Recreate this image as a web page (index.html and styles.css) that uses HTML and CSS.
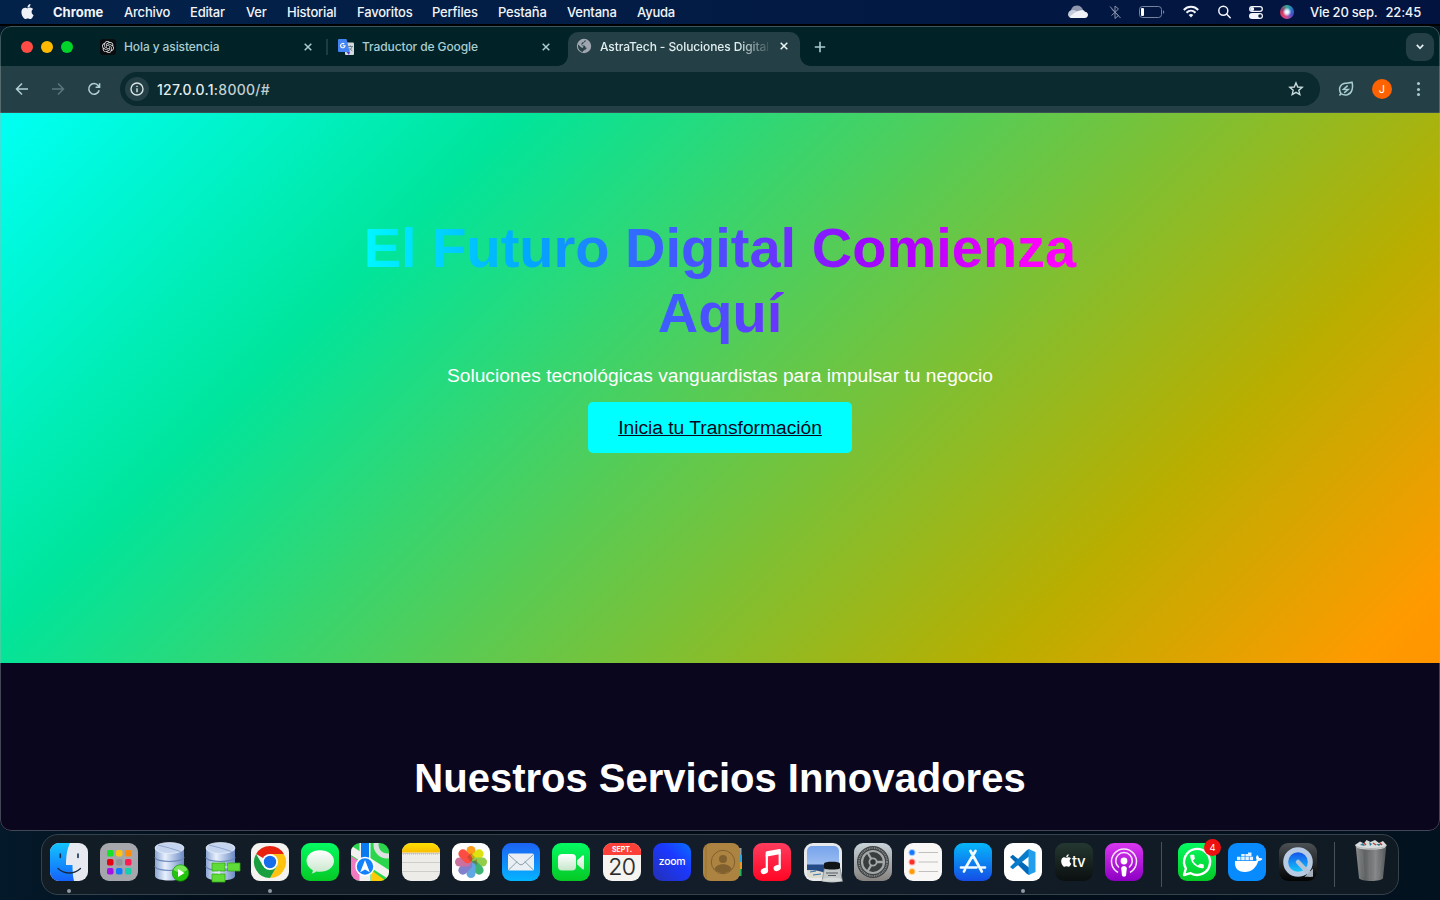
FILE: index.html
```html
<!DOCTYPE html>
<html lang="es">
<head>
<meta charset="utf-8">
<title>AstraTech - Soluciones Digitales</title>
<link rel="stylesheet" href="styles.css">
</head>
<body>
<div class="desktop">
  <header class="menubar">
    <svg class="apple" viewBox="0 0 24 24"><path fill="#eef1f6" d="M12.152 6.896c-.948 0-2.415-1.078-3.96-1.04-2.04.027-3.91 1.183-4.961 3.014-2.117 3.675-.546 9.103 1.519 12.09 1.013 1.454 2.208 3.09 3.792 3.039 1.52-.065 2.09-.987 3.935-.987 1.831 0 2.35.987 3.96.948 1.637-.026 2.676-1.48 3.676-2.948 1.156-1.688 1.636-3.325 1.662-3.415-.039-.013-3.182-1.221-3.22-4.857-.026-3.04 2.48-4.494 2.597-4.559-1.429-2.09-3.623-2.324-4.39-2.376-2-.156-3.675 1.09-4.61 1.09zM15.53 3.83c.843-1.012 1.4-2.427 1.245-3.83-1.207.052-2.662.805-3.532 1.818-.78.896-1.454 2.338-1.273 3.714 1.338.104 2.715-.688 3.559-1.701"/></svg>
    <nav class="menus">
      <span class="app-name">Chrome</span><span>Archivo</span><span>Editar</span><span>Ver</span><span>Historial</span><span>Favoritos</span><span>Perfiles</span><span>Pestaña</span><span>Ventana</span><span>Ayuda</span>
    </nav>
    <div class="status">
      <svg width="22" height="24" viewBox="0 0 22 24"><path fill="#8e97ad" d="M4 13.500C3 9 6 5.500 10 5.500c3 0 5 1.500 6 4.500L9 14z"/><path fill="#c5cbd8" d="M1 14.500c0-2.500 2-4.500 5-4.500 2 0 3 .7 4 1.500L4 17.500C2 17.500 1 16 1 14.500z"/><path fill="#f0f2f6" d="M2.500 17C6 14 9 11 13 10.500c1-.6 3-.8 4 0 .4.200.6.700.8 1.200 2 .1 3.200 1.400 3.200 3.100 0 2-1.200 3.200-3.200 3.200H5c-1 0-2-.3-2.500-1z"/></svg>
      <svg width="12" height="24" viewBox="0 0 12 24" fill="none" stroke="#8993aa" stroke-width="1"><path d="M2.500 9l7 6.500L6 18.500V6l3.500 3-7 6.500M1 6.500l10.500 11.500"/></svg>
      <svg width="26" height="24" viewBox="0 0 26 24"><rect x=".5" y="6.500" width="22" height="11" rx="3" fill="none" stroke="#77829c"/><rect x="2" y="8" width="3" height="8" rx="1" fill="#fff"/><path d="M24 10.200c1.700.5 1.700 3.100 0 3.600z" fill="#77829c"/></svg>
      <svg width="16" height="24" viewBox="0 0 16 24" fill="none" stroke="#f2f5f9" stroke-width="2"><path d="M.8 10c4-4.200 10.400-4.200 14.400 0M3.500 12.700c2.600-2.600 6.400-2.600 9 0"/><path d="M5.700 15a3.300 3.300 0 0 1 4.600 0L8 17.400z" fill="#f2f5f9" stroke="none"/></svg>
      <svg width="13" height="24" viewBox="0 0 13 24" fill="none" stroke="#f2f5f9" stroke-width="1.500"><circle cx="5.300" cy="10.800" r="4.500"/><path d="M8.600 14.100l3.600 3.700" stroke-linecap="round"/></svg>
      <svg width="14" height="24" viewBox="0 0 14 24"><rect x=".7" y="6.700" width="12.600" height="4.600" rx="2.300" fill="none" stroke="#f2f5f9" stroke-width="1.300"/><circle cx="3.200" cy="9" r="2" fill="#f2f5f9"/><rect x="0" y="13" width="14" height="6" rx="3" fill="#f2f5f9"/><circle cx="11" cy="16" r="1.800" fill="#04183c"/></svg>
      <span class="siri"></span>
    </div>
    <div class="clock"><span>Vie 20 sep.</span><span>22:45</span></div>
  </header>

  <main class="window">
    <div class="tabs">
      <div class="lights"><i class="red"></i><i class="yellow"></i><i class="green"></i></div>
      <div class="tab">
        <svg class="fav" viewBox="0 0 16 16"><rect width="16" height="16" rx="3" fill="#0b0c0e"/><path transform="translate(2 2) scale(.5)" fill="#e8eaec" d="M22.2819 9.8211a5.9847 5.9847 0 0 0-.5157-4.9108 6.0462 6.0462 0 0 0-6.5098-2.9A6.0651 6.0651 0 0 0 4.9807 4.1818a5.9847 5.9847 0 0 0-3.9977 2.9 6.0462 6.0462 0 0 0 .7427 7.0966 5.98 5.98 0 0 0 .511 4.9107 6.051 6.051 0 0 0 6.5146 2.9001A5.9847 5.9847 0 0 0 13.2599 24a6.0557 6.0557 0 0 0 5.7718-4.2058 5.9894 5.9894 0 0 0 3.9977-2.9001 6.0557 6.0557 0 0 0-.7475-7.0729zm-9.022 12.6081a4.4755 4.4755 0 0 1-2.8764-1.0408l.1419-.0804 4.7783-2.7582a.7948.7948 0 0 0 .3927-.6813v-6.7369l2.02 1.1686a.071.071 0 0 1 .038.052v5.5826a4.504 4.504 0 0 1-4.4945 4.4944zm-9.6607-4.1254a4.4708 4.4708 0 0 1-.5346-3.0137l.142.0852 4.783 2.7582a.7712.7712 0 0 0 .7806 0l5.8428-3.3685v2.3324a.0804.0804 0 0 1-.0332.0615L9.74 19.9502a4.4992 4.4992 0 0 1-6.1408-1.6464zM2.3408 7.8956a4.485 4.485 0 0 1 2.3655-1.9728V11.6a.7664.7664 0 0 0 .3879.6765l5.8144 3.3543-2.0201 1.1685a.0757.0757 0 0 1-.071 0l-4.8303-2.7865A4.504 4.504 0 0 1 2.3408 7.872zm16.5963 3.8558L13.1038 8.364 15.1192 7.2a.0757.0757 0 0 1 .071 0l4.8303 2.7913a4.4944 4.4944 0 0 1-.6765 8.1042v-5.6772a.79.79 0 0 0-.407-.667zm2.0107-3.0231l-.142-.0852-4.7735-2.7818a.7759.7759 0 0 0-.7854 0L9.409 9.2297V6.8974a.0662.0662 0 0 1 .0284-.0615l4.8303-2.7866a4.4992 4.4992 0 0 1 6.6802 4.66zM8.3065 12.863l-2.02-1.1638a.0804.0804 0 0 1-.038-.0567V6.0742a4.4992 4.4992 0 0 1 7.3757-3.4537l-.142.0805L8.704 5.459a.7948.7948 0 0 0-.3927.6813zm1.0976-2.3654l2.602-1.4998 2.6069 1.4998v2.9994l-2.5974 1.4997-2.6067-1.4997Z"/></svg>
        <span class="title">Hola y asistencia</span>
        <svg class="close" viewBox="0 0 8 8"><path d="M.7.7l6.600 6.600M7.300.7L.7 7.300"/></svg>
      </div>
      <div class="tab split">
        <svg class="fav" viewBox="0 0 16 16"><rect x="7" y="3.500" width="9" height="12.500" rx="1" fill="#d5dade"/><path d="M8.500 13L11 16l1-3z" fill="#5b3fc4"/><path d="M10 7.500h5M12.500 6.500v1M14 7.500c-.5 2-1.500 3-3 4M11.500 9c.7 1.200 1.500 2 2.800 2.800" stroke="#66787f" fill="none" stroke-width=".9"/><path d="M1 0h7.500l3.200 13H1a1 1 0 0 1-1-1V1a1 1 0 0 1 1-1z" fill="#4384f5"/><path d="M6.300 5A2.200 2.200 0 1 0 7 6.700H4.800" fill="none" stroke="#fff" stroke-width="1.100"/></svg>
        <span class="title">Traductor de Google</span>
        <svg class="close" viewBox="0 0 8 8"><path d="M.7.7l6.600 6.600M7.300.7L.7 7.300"/></svg>
      </div>
      <div class="tab active">
        <svg class="fav" viewBox="0 0 16 16"><circle cx="8" cy="8" r="7.200" fill="#a0a6b1"/><path d="M9.500 1.800c.5 1.800-.3 2.700-1.800 2.800-.2 1.400-1 1.700-1.800 1.900.1 1 .9.900 2 1 1.300.1 1.600 1.100 1.500 1.900l1.300.4-.7 1.700c-1.100-.2-1.700.3-1.900 1.200L7 12.800v1.100C4 13.500 2 11 2 8c0-.6.1-1 .2-1.500L5 9.300l1.700.6.800-1.300-2-1.600.2-2.200 2-.8z" fill="#294349"/></svg>
        <span class="title fade">AstraTech - Soluciones Digitales</span>
        <svg class="close" viewBox="0 0 8 8"><path d="M.7.7l6.600 6.600M7.300.7L.7 7.300"/></svg>
      </div>
      <svg class="plus" viewBox="0 0 12 12"><path d="M6 .8v10.400M.8 6h10.400"/></svg>
      <div class="chevron"><svg width="8" height="6" viewBox="0 0 8 6"><path d="M.8.9L4 4.300 7.200.9" fill="none" stroke="#e2eff0" stroke-width="1.700"/></svg></div>
    </div>

    <div class="toolbar">
      <svg class="nav" viewBox="0 0 16 16"><path d="M14 8H3M8 2.500L2.500 8 8 13.500"/></svg>
      <svg class="nav dim" viewBox="0 0 16 16"><path d="M2 8h11M8 2.500L13.500 8 8 13.500"/></svg>
      <svg class="nav" viewBox="0 0 16 16"><path d="M13.200 9.300A5.300 5.300 0 1 1 12.300 4.700L13.400 6M13.600 2.300V6.300H9.600"/></svg>
      <div class="omnibox">
        <span class="info"><svg width="14" height="14" viewBox="0 0 14 14"><circle cx="7" cy="7" r="6" fill="none" stroke="#d8e5e6" stroke-width="1.400"/><path d="M7 6.200v4M7 3.700v1.400" stroke="#d8e5e6" stroke-width="1.400"/></svg></span>
        <span class="url">127.0.0.1<span>:8000/#</span></span>
        <svg class="star" viewBox="0 0 16 16"><path d="M8 1.900l1.750 4.100 4.450.4-3.370 2.930 1 4.340L8 11.400l-3.830 2.270 1-4.340L1.800 6.400l4.450-.4z" fill="none" stroke="#c9dadb" stroke-width="1.400"/></svg>
      </div>
      <svg class="leaf" viewBox="0 0 16 16" fill="none" stroke="#a9cdd2" stroke-width="1.500"><path d="M3 12.500C0 8 2 3 7 2.200c2.500-.4 5-.2 7-.9.600 2 .8 5-.1 8-1.400 4.500-7 6.300-10.900 3.200zm0 0l-1.500 2"/><path d="M9.700 4.600L5.500 8.300l4.700.2-4.100 3.300" stroke-width="1.500"/></svg>
      <span class="avatar">J</span>
      <span class="dots"><i></i><i></i><i></i></span>
    </div>

    <section class="hero">
      <h1>El Futuro Digital Comienza Aquí</h1>
      <p>Soluciones tecnológicas vanguardistas para impulsar tu negocio</p>
      <a class="cta" href="#">Inicia tu Transformación</a>
    </section>
    <section class="services"><h2>Nuestros Servicios Innovadores</h2></section>
  </main>

  <footer class="dock">
    <svg width="0" height="0" class="defs"><defs>
      <linearGradient id="finder" x1="0" y1="0" x2="0" y2="1"><stop stop-color="#12c5ff"/><stop offset="1" stop-color="#1562fb"/></linearGradient>
      <linearGradient id="greenG" x1="0" y1="0" x2="0" y2="1"><stop stop-color="#04fa62"/><stop offset="1" stop-color="#05c925"/></linearGradient>
      <linearGradient id="blueUp" x1="0" y1="0" x2="0" y2="1"><stop stop-color="#1d62f3"/><stop offset="1" stop-color="#04b4ff"/></linearGradient>
      <linearGradient id="blueDn" x1="0" y1="0" x2="0" y2="1"><stop stop-color="#05b7fa"/><stop offset="1" stop-color="#154ee6"/></linearGradient>
      <linearGradient id="redG" x1="0" y1="0" x2="0" y2="1"><stop stop-color="#ff3c5e"/><stop offset="1" stop-color="#ff0524"/></linearGradient>
      <linearGradient id="purG" x1="0" y1="0" x2="0" y2="1"><stop stop-color="#d936ef"/><stop offset="1" stop-color="#8d00c4"/></linearGradient>
      <linearGradient id="whiteG" x1="0" y1="0" x2="0" y2="1"><stop stop-color="#fff"/><stop offset="1" stop-color="#c6e6ca"/></linearGradient>
      <linearGradient id="yel" x1="0" y1="0" x2="0" y2="1"><stop stop-color="#ffdf00"/><stop offset="1" stop-color="#f9bd00"/></linearGradient>
      <linearGradient id="zoomG" x1="1" y1="0" x2="0" y2="1"><stop stop-color="#0870ff"/><stop offset=".4" stop-color="#1b38ff"/><stop offset="1" stop-color="#2430b4"/></linearGradient>
      <linearGradient id="metal" x1="0" y1="0" x2="0" y2="1"><stop stop-color="#c8d3d9"/><stop offset="1" stop-color="#85827f"/></linearGradient>
      <linearGradient id="dark" x1="0" y1="0" x2="0" y2="1"><stop stop-color="#4b5054"/><stop offset="1" stop-color="#020303"/></linearGradient>
      <linearGradient id="tvG" x1="0" y1="0" x2="0" y2="1"><stop stop-color="#243830"/><stop offset="1" stop-color="#0b0f10"/></linearGradient>
      <linearGradient id="qt" x1="0" y1="0" x2="0" y2="1"><stop stop-color="#1746e8"/><stop offset="1" stop-color="#14d4fd"/></linearGradient>
      <linearGradient id="cyl"><stop stop-color="#8ca6d3"/><stop offset=".35" stop-color="#e7f0fd"/><stop offset="1" stop-color="#6c8ac4"/></linearGradient>
      <linearGradient id="bin"><stop stop-color="#8b8d8e"/><stop offset=".3" stop-color="#5f6263"/><stop offset=".65" stop-color="#858788"/><stop offset="1" stop-color="#525556"/></linearGradient>
      <linearGradient id="sky" x1="0" y1="0" x2="0" y2="1"><stop stop-color="#76a3ec"/><stop offset="1" stop-color="#b7d0f4"/></linearGradient>
      <clipPath id="sq"><rect width="38" height="38" rx="9"/></clipPath>
      <g id="db"><path d="M5 5v28c0 6 29 6 29 0V5z" fill="url(#cyl)"/><ellipse cx="19.500" cy="5" rx="14.500" ry="5.500" fill="#c6d5ef" stroke="#e9f0fb" stroke-width=".7"/><path d="M19.500 5L8 2M19.500 5l11 3.500" stroke="#8fa6cf" stroke-width="1"/><path d="M5 14c0 6 29 6 29 0M5 23c0 6 29 6 29 0" fill="none" stroke="#6c87b9" stroke-width="1.100"/></g>
    </defs></svg>

    <div class="cell running"><svg viewBox="0 0 38 38"><g clip-path="url(#sq)"><path fill="#e6e9f0" d="M0 0h38v38H0z"/><path fill="url(#finder)" d="M0 0h20c-2.500 5-4 12-4 22h6.500c0 6 .3 11 1.500 16H0z"/></g><path d="M10.300 11v3.500M28 11v3.500" stroke="#142f4b" stroke-width="1.600" stroke-linecap="round"/><path d="M8 25.500c6.500 6 16 6 22.500 0" fill="none" stroke="#172a40" stroke-width="1.300" stroke-linecap="round"/></svg></div>
    <div class="cell"><svg viewBox="0 0 38 38"><rect width="38" height="38" rx="9" fill="#a5a7ad"/><g><rect x="7" y="7" width="6.500" height="6.500" rx="1.700" fill="#16e325"/><rect x="16" y="7" width="6.500" height="6.500" rx="1.700" fill="#ffc311"/><rect x="25" y="7" width="6.500" height="6.500" rx="1.700" fill="#ff8b0a"/><rect x="7" y="16" width="6.500" height="6.500" rx="1.700" fill="#e50211"/><rect x="16" y="16" width="6.500" height="6.500" rx="1.700" fill="#92989a"/><rect x="25" y="16" width="6.500" height="6.500" rx="1.700" fill="#ff1b54"/><rect x="7" y="25" width="6.500" height="6.500" rx="1.700" fill="#a412e6"/><rect x="16" y="25" width="6.500" height="6.500" rx="1.700" fill="#117bff"/><rect x="25" y="25" width="6.500" height="6.500" rx="1.700" fill="#13cfad"/></g></svg></div>
    <div class="cell"><svg viewBox="0 0 38 38"><use href="#db"/><circle cx="30.500" cy="30" r="8.200" fill="#23c40c" stroke="#179300" stroke-width=".7"/><path d="M23.500 27a7.500 7.500 0 0 1 14 0c-5 3-9 3-14 0z" fill="#75e757"/><path d="M28 26v8l6.500-4z" fill="#fff"/></svg></div>
    <div class="cell"><svg viewBox="0 0 38 38"><use href="#db"/><g fill="#60dc39" stroke="#34a718" stroke-width=".8"><path d="M11 20h13v8H11zM26.500 20h12.500v8H26.500zM11 31h13v8H11z"/></g><path d="M18 28v3M24 24h2.500" stroke="#eef"/></svg></div>
    <div class="cell running"><svg viewBox="0 0 38 38"><rect width="38" height="38" rx="9" fill="#f4f3f0"/><path fill="#e9210f" d="M19 19L5.140 11A16 16 0 0 1 32.860 11z"/><path fill="#ffc20f" d="M19 11h13.860A16 16 0 0 1 19 35l6.900-12z"/><path fill="#199f40" d="M12.100 23L5.140 11A16 16 0 0 0 19 35l6.900-12z"/><circle cx="19" cy="19" r="8" fill="#fff"/><circle cx="19" cy="19" r="6.200" fill="#176dea"/></svg></div>
    <div class="cell"><svg viewBox="0 0 38 38"><rect width="38" height="38" rx="9" fill="url(#greenG)"/><path d="M19 7.200c8 0 14 4.700 14 10.800s-6 10.800-14 10.800c-1.300 0-2.600-.1-3.800-.4-1.200 1-2.700 1.800-4.700 2.200.9-1 1.300-2.100 1.300-3.400C7.600 25 5.500 21.500 5.500 18 5.500 11.900 11 7.200 19 7.200z" fill="url(#whiteG)"/></svg></div>
    <div class="cell"><svg viewBox="0 0 38 38"><g clip-path="url(#sq)"><path fill="#2bd64c" d="M0 0h38v38H0z"/><path fill="#f27ac0" d="M0 13l12 8v17H0z"/><path fill="#ffcb08" d="M20 38V27l15 11z"/><path d="M-2 6l42 27" stroke="#f3f1ef" stroke-width="8"/><path d="M14 0v38" stroke="#f3f1ef" stroke-width="11"/><path d="M14 0v20" stroke="#0879ee" stroke-width="8"/><circle cx="36" cy="2" r="11" fill="none" stroke="#dedfe0" stroke-width="5"/></g><circle cx="14" cy="23.500" r="9" fill="#1482fb" stroke="#fff" stroke-width="1.500"/><path d="M14 17l4.800 12.200L14 26.500l-4.800 2.700z" fill="#fff"/></svg></div>
    <div class="cell"><svg viewBox="0 0 38 38"><g clip-path="url(#sq)"><path fill="#eeece8" d="M0 0h38v38H0z"/><path fill="url(#yel)" d="M0 0h38v9.500H0z"/><path d="M0 10.500h38M0 19.500h38M0 28.500h38" stroke="#c8c6c2" stroke-width=".8"/><path d="M1 11h36" stroke="#aaa" stroke-dasharray=".8 1.200"/></g></svg></div>
    <div class="cell"><svg viewBox="0 0 38 38"><rect width="38" height="38" rx="9" fill="#fff"/><g opacity=".93"><rect x="14.500" y="3" width="9" height="16" rx="4.500" fill="#ff9508"/><rect x="14.500" y="3" width="9" height="16" rx="4.500" fill="#dce000" transform="rotate(45 19 19)"/><rect x="14.500" y="3" width="9" height="16" rx="4.500" fill="#8acb3c" transform="rotate(90 19 19)"/><rect x="14.500" y="3" width="9" height="16" rx="4.500" fill="#30ae69" transform="rotate(135 19 19)"/><rect x="14.500" y="3" width="9" height="16" rx="4.500" fill="#55a0e0" transform="rotate(180 19 19)"/><rect x="14.500" y="3" width="9" height="16" rx="4.500" fill="#7976c8" transform="rotate(225 19 19)"/><rect x="14.500" y="3" width="9" height="16" rx="4.500" fill="#c66799" transform="rotate(270 19 19)"/><rect x="14.500" y="3" width="9" height="16" rx="4.500" fill="#fc4035" transform="rotate(315 19 19)"/></g><path d="M19 19l-4-5 4-4 4 4zM19 19l6 3v-6z" fill="#853914" opacity=".35"/></svg></div>
    <div class="cell"><svg viewBox="0 0 38 38"><rect width="38" height="38" rx="9" fill="url(#blueUp)"/><rect x="6" y="10.500" width="26" height="17" rx="1.500" fill="#e9eff3"/><path d="M6.500 11.500l10.500 9.500c1.200 1 2.800 1 4 0l10.500-9.500M6.500 27l8.800-8.500M31.500 27l-8.800-8.500" fill="none" stroke="#8aa0ae" stroke-width="1"/></svg></div>
    <div class="cell"><svg viewBox="0 0 38 38"><rect width="38" height="38" rx="9" fill="url(#greenG)"/><rect x="6" y="11" width="18" height="16.500" rx="4" fill="url(#whiteG)"/><path d="M25 17.500l5.500-5c.8-.5 1.500-.2 1.500.7v12.300c0 .9-.7 1.200-1.500.7l-5.500-5z" fill="url(#whiteG)"/></svg></div>
    <div class="cell"><svg viewBox="0 0 38 38"><g clip-path="url(#sq)"><path fill="#f6f4f1" d="M0 0h38v38H0z"/><path fill="#ff4038" d="M0 0h38v12H0z"/></g><text x="19" y="9.300" class="cal-month">SEPT.</text><text x="18.700" y="32" class="cal-day">20</text></svg></div>
    <div class="cell"><svg viewBox="0 0 38 38"><rect width="38" height="38" rx="9" fill="url(#zoomG)"/><text x="19" y="21.800" class="zoom-word">zoom</text></svg></div>
    <div class="cell"><svg viewBox="0 0 38 38"><path d="M34 5h4.500v7H34z" fill="#929a98"/><path d="M34 12h5v7h-5z" fill="#27a5df"/><path d="M34 19h5v7h-5z" fill="#e99821"/><path d="M34 26h4.500v7H34z" fill="#29b65b"/><rect width="37" height="38" rx="8" fill="#ad8342"/><path d="M3 2v34" stroke="#906a30" stroke-width=".7"/><circle cx="20" cy="19" r="11.700" fill="none" stroke="#80602e" stroke-width="1"/><circle cx="20" cy="16" r="4" fill="#80602e"/><path d="M11.500 26c1.500-6.500 15.500-6.500 17 0-4 5.500-13 5.500-17 0z" fill="#80602e"/></svg></div>
    <div class="cell"><svg viewBox="0 0 38 38"><rect width="38" height="38" rx="9" fill="url(#redG)"/><path d="M13.800 11.500v16M26.700 9v15.500" stroke="#fff" stroke-width="2.200"/><path d="M12.700 9.500c0-.7.400-1.200 1.100-1.300l12.700-2.200c.8-.1 1.300.3 1.300 1.100V11l-15.100 2.700z" fill="#fff"/><ellipse cx="11.400" cy="28" rx="3.700" ry="3" fill="#fff" transform="rotate(-18 11.400 28)"/><ellipse cx="24.200" cy="25" rx="3.700" ry="3" fill="#fff" transform="rotate(-18 24.200 25)"/></svg></div>
    <div class="cell"><svg viewBox="0 0 38 38"><rect width="38" height="38" rx="9" fill="#e8e9ea"/><rect x="3" y="3" width="32" height="32" rx="5" fill="url(#sky)"/><path d="M3 21.500h32V31H3z" fill="#254b86"/><path d="M3 27c8 0 14 1 18 3v5H8c-3 0-5-2-5-4z" fill="#dedbd0"/><path d="M6 29l6-1M9 32l8-1" stroke="#3575a8"/><path d="M20.500 24.500h15.500l2.500 14H18z" fill="#c2c8c8" stroke="#7b8283" stroke-width=".7"/><ellipse cx="28" cy="37" rx="10" ry="2.500" fill="#d9dddd" opacity=".8"/><path d="M20 20.500c0-2.500 16-2.500 16 0V25c0 2-16 2-16 0z" fill="#111518"/><path d="M22 30h12M24 32.500h8" stroke="#555b5d"/></svg></div>
    <div class="cell"><svg viewBox="0 0 38 38"><rect width="38" height="38" rx="9" fill="url(#metal)"/><circle cx="19" cy="19" r="16" fill="#3f4243"/><circle cx="19" cy="19" r="14" fill="none" stroke="#8e9293" stroke-width="1.600" stroke-dasharray="1 .8"/><circle cx="19" cy="19" r="11" fill="#3a3d3e" stroke="#a4a8a9" stroke-width="2.200"/><path d="M19 19h11M19 19l-5.500-9.500M19 19l-5.500 9.500" stroke="#a4a8a9" stroke-width="2.300"/><circle cx="19" cy="19" r="3.600" fill="#2f3334" stroke="#a4a8a9" stroke-width="1.800"/></svg></div>
    <div class="cell"><svg viewBox="0 0 38 38"><rect width="38" height="38" rx="9" fill="#f8f7f5"/><path d="M14.500 9.500H34M14.500 19H34M14.500 28.500H34" stroke="#bbb9b7" stroke-width=".9"/><circle cx="8" cy="9.500" r="3.500" fill="#a9cffd"/><circle cx="8" cy="9.500" r="2.500" fill="#1678ff"/><circle cx="8" cy="19" r="3.500" fill="#ffb1ae"/><circle cx="8" cy="19" r="2.500" fill="#fb3028"/><circle cx="8" cy="28.500" r="3.500" fill="#ffd9a4"/><circle cx="8" cy="28.500" r="2.500" fill="#ff9a0b"/></svg></div>
    <div class="cell"><svg viewBox="0 0 38 38"><rect width="38" height="38" rx="9" fill="url(#blueDn)"/><path d="M21.500 8L12 24M16.500 8L27.800 28.500M7 24.500h15.500M27 24.500h4M11 26.500l-1 2" fill="none" stroke="#f0faff" stroke-width="2.700" stroke-linecap="round"/></svg></div>
    <div class="cell running"><svg viewBox="0 0 38 38"><rect width="38" height="38" rx="9" fill="#fff"/><path d="M6 14l2.800-2.200L25.500 25v7L23 31z" fill="#0068b8"/><path d="M6 24l2.800 2.200L25.500 13V6L23 7z" fill="#087cca"/><path d="M24.500 6l7 3v20l-7 3z" fill="#219fec"/></svg></div>
    <div class="cell"><svg viewBox="0 0 38 38"><rect width="38" height="38" rx="9" fill="url(#tvG)"/><path transform="translate(5 11.300) scale(.52)" fill="#fff" d="M12.152 6.896c-.948 0-2.415-1.078-3.960-1.040-2.040.027-3.910 1.183-4.961 3.014-2.117 3.675-.546 9.103 1.519 12.090 1.013 1.454 2.208 3.090 3.792 3.039 1.520-.065 2.090-.987 3.935-.987 1.831 0 2.350.987 3.960.948 1.637-.026 2.676-1.480 3.676-2.948 1.156-1.688 1.636-3.325 1.662-3.415-.039-.013-3.182-1.221-3.220-4.857-.026-3.040 2.480-4.494 2.597-4.559-1.429-2.090-3.623-2.324-4.390-2.376-2-.156-3.675 1.090-4.610 1.090zM15.530 3.830c.843-1.012 1.400-2.427 1.245-3.830-1.207.052-2.662.805-3.532 1.818-.78.896-1.454 2.338-1.273 3.714 1.338.104 2.715-.688 3.559-1.701"/><text x="17" y="24" class="tv-word">tv</text></svg></div>
    <div class="cell"><svg viewBox="0 0 38 38"><rect width="38" height="38" rx="9" fill="url(#purG)"/><g fill="none" stroke="#f7e8fb" stroke-width="1.500"><path d="M13 29.500a12.500 12.500 0 1 1 12 0"/><path d="M14 24.500a8.300 8.300 0 1 1 10 0"/></g><circle cx="19" cy="18" r="3.400" fill="#fff"/><path d="M16.200 25.500c0-3.500 5.600-3.500 5.600 0l-.8 7c-.3 1.500-3.700 1.500-4 0z" fill="#fff"/></svg></div>
    <span class="sep"></span>
    <div class="cell"><svg viewBox="0 0 38 38"><rect width="38" height="38" rx="9" fill="url(#greenG)"/><path d="M6 32l1.900-6.500A13 13 0 1 1 12.700 30.200z" fill="none" stroke="#fff" stroke-width="2.400" stroke-linejoin="round"/><path transform="translate(10 9.500) scale(.75)" fill="#fff" d="M6.620 10.790c1.440 2.830 3.760 5.140 6.590 6.590l2.200-2.200c.27-.27.67-.36 1.020-.24 1.120.37 2.330.57 3.570.57.55 0 1 .45 1 1V20c0 .55-.45 1-1 1-9.390 0-17-7.610-17-17 0-.55.45-1 1-1h3.500c.55 0 1 .45 1 1 0 1.250.2 2.450.57 3.570.11.350.030.740-.25 1.020z"/></svg><span class="badge">4</span></div>
    <div class="cell"><svg viewBox="0 0 38 38"><rect width="38" height="38" rx="9" fill="#078bff"/><path d="M7 18h19.500c1.300 0 2-.3 2.200-1-1-2-.8-3.500.4-5 1.200.8 1.800 1.900 1.900 3 1.200-.2 2.500 0 3.500.8-.8 1.500-2.200 2.200-4.200 2.200-2 6.500-6.500 11-13.500 11-7 0-10.500-4-9.800-11z" fill="#fff"/><path d="M9 13.700h3.500v3.500H9zM13.200 13.700h3.500v3.500h-3.500zM17.400 13.700h3.500v3.500h-3.500zM21.600 13.700h3.500v3.500h-3.500zM13.200 11h3.500v2.300h-3.500zM17.400 11h3.500v2.300h-3.500zM20 9.500h3.500v3.800H20z" fill="#e2f2ff"/></svg></div>
    <div class="cell"><svg viewBox="0 0 38 38"><rect width="38" height="38" rx="9" fill="url(#dark)"/><circle cx="19" cy="19" r="12.300" fill="url(#qt)" stroke="#b9cbe2" stroke-width="5"/><path d="M19 19l12 12.500" stroke="#b4c3d5" stroke-width="4.500" stroke-linecap="round"/><path d="M25.500 33.800H34V25.500z" fill="#a5b1bf"/></svg></div>
    <span class="sep"></span>
    <div class="cell"><svg viewBox="0 0 38 38"><path d="M3.500 1.500h31L31 35c-.5 4-23 4-24 0z" fill="url(#bin)"/><path d="M3 2L8-1.500l4 2 2.500-3.500 4 2 4.500-2L27 0l4-2 3.500 4-2 3c-7 2-20 2-27 0z" fill="#d9dcdd"/><path d="M8 2l3-2 2 3zM17-1l3 2-2 2zM24 1l3 2 2-2z" fill="#287b91"/><path d="M12 0l2 2M21 0l3 2M28 0l2 2" stroke="#b84235" stroke-width="1.500"/><path d="M3.500 2.500c2 4 29 4 31 0" fill="none" stroke="#b3b6b7" stroke-width="1"/><path d="M10 10l2 24M17 10l.5 26M24 10l-1 26M30 9l-3 25" stroke="#a2a5a6" stroke-opacity=".15"/></svg></div>
  </footer>
</div>
</body>
</html>
```
FILE: styles.css
```css
* { box-sizing: border-box; }
body { margin: 0; font-family: Inter, "Liberation Sans", sans-serif; }
.desktop {
  width: 1440px; height: 900px; overflow: hidden;
  display: flex; flex-direction: column;
  background: linear-gradient(90deg, #04192a, #020b14 20%, #020d19 70%, #03121f);
}

/* System menu bar */
.menubar {
  height: 26px; flex: none; display: flex; align-items: center;
  padding: 0 19px 1px 20px; color: #f1f4f9;
  font-size: 13px; font-weight: 500; white-space: nowrap;
  background: linear-gradient(90deg, #03224a, #021c45 45%, #021340);
  border-bottom: 2px solid #000;
}
.apple { width: 15px; height: 17px; margin-right: 18px; flex: none; }
.menus {
  display: grid; letter-spacing: -0.2px;
  grid-template-columns: 71px 66px 56px 41px 70px 75px 66px 69px 70px 50px;
}
.app-name { font-weight: 700; letter-spacing: 0; }
.status { margin-left: auto; display: flex; align-items: center; }
.status svg { flex: none; margin-right: 19px; }
.status svg:first-child { margin-right: 20px; }
.status svg:nth-child(2) { margin-right: 18px; }
.status svg:nth-child(3) { margin-right: 18px; }
.status svg:nth-child(5) { margin-right: 18px; }
.status svg:nth-child(6) { margin-right: 17px; }
.siri {
  width: 14px; height: 14px; border-radius: 50%; margin-right: 16px;
  background: radial-gradient(circle, #fff 0, #d9edff 18%, transparent 45%), conic-gradient(#34ad95, #2674c8, #4b4cc8, #c34e9c, #e6385e, #943b6a, #34ad95);
}
.clock { display: flex; gap: 8px; letter-spacing: -0.22px; }

/* Browser window */
.window {
  height: 805px; flex: none; display: flex; flex-direction: column; overflow: hidden;
  position: relative; border-radius: 11px; background: #0a061d;
}
.window::after {
  content: ""; position: absolute; inset: 0; border-radius: 11px; pointer-events: none;
  border: 1px solid rgba(160, 175, 180, 0.38);
}
.tabs { height: 40px; flex: none; display: flex; align-items: center; padding: 1px 1px 0; background: #012327; }
.lights { display: flex; gap: 8px; width: 89px; padding-left: 20px; flex: none; }
.lights i { width: 12px; height: 12px; border-radius: 50%; }
.red { background: #ff4b45; }
.yellow { background: #ffba00; }
.green { background: #00d42b; }
.tab {
  width: 238px; height: 33px; flex: none; display: flex; align-items: center;
  padding: 0 15px 0 10px; color: #a9cdd1; font-size: 12px; font-weight: 450; position: relative;
}
.fav { width: 16px; height: 16px; margin-right: 8px; flex: none; }
.title { flex: 1; white-space: nowrap; overflow: hidden; letter-spacing: -0.1px; }
.close { width: 8px; height: 8px; margin: 0 1px 0 12px; flex: none; fill: none; stroke: #a9cdd1; stroke-width: 1.500; }
.split::before { content: ""; position: absolute; left: -2px; top: 9px; width: 2px; height: 16px; background: #1d3d41; }
.active {
  width: 232px; height: 34px; margin: 5px 0 0 2px; padding: 0 11px 6px 8px;
  border-radius: 10px 10px 0 0; background: #243f45; color: #e1eeef;
}
.active::before, .active::after { content: ""; position: absolute; bottom: 0; width: 10px; height: 10px; }
.active::before { left: -10px; background: radial-gradient(circle at 0 0, transparent 9.5px, #243f45 10px); }
.active::after { right: -10px; background: radial-gradient(circle at 100% 0, transparent 9.5px, #243f45 10px); }
.active .close { stroke: #eef6f6; }
.fade { -webkit-mask-image: linear-gradient(90deg, #000 82%, rgba(0,0,0,.15)); mask-image: linear-gradient(90deg, #000 82%, rgba(0,0,0,.15)); }
.plus { width: 12px; height: 12px; margin-left: 14px; stroke: #a9cdd1; stroke-width: 1.600; }
.chevron {
  width: 28px; height: 28px; margin: 0 5px 0 auto; border-radius: 9px;
  display: flex; align-items: center; justify-content: center; background: #243f45;
}
.toolbar {
  height: 47px; flex: none; display: flex; align-items: center;
  padding: 0 17px 0 14px; background: #243f45; border-bottom: 1px solid #3a5054;
}
.nav { width: 16px; height: 16px; margin-right: 20px; flex: none; fill: none; stroke: #b1d1d5; stroke-width: 1.500; }
.nav:nth-child(3) { margin-right: 18px; }
.dim { stroke: #5c777c; }
.omnibox {
  width: 1200px; height: 34px; flex: none; display: flex; align-items: center;
  padding: 0 16px 0 5px; border-radius: 17px; background: #0a2a2f;
}
.info { width: 24px; height: 24px; border-radius: 50%; display: flex; align-items: center; justify-content: center; background: #243f45; }
.url { margin-left: 8px; color: #e4eded; font-size: 14px; font-weight: 450; letter-spacing: 0.25px; }
.url span { color: #c4d0d1; }
.star { width: 16px; height: 16px; margin-left: auto; }
.leaf { width: 16px; height: 16px; margin-left: 18px; }
.avatar {
  width: 20px; height: 20px; margin-left: 18px; border-radius: 50%;
  display: flex; align-items: center; justify-content: center;
  background: #ff6200; color: #fff; font-size: 11px;
}
.dots { width: 3px; margin: 0 3px 0 auto; display: flex; flex-direction: column; gap: 2.500px; }
.dots i { width: 3px; height: 3px; border-radius: 50%; background: #a9cdd1; }

/* Page */
.hero {
  height: 550px; flex: none; display: flex; flex-direction: column; align-items: center;
  padding-top: 102px; text-align: center;
  font-family: "Liberation Sans", Arial, sans-serif; color: #fff;
  background: linear-gradient(135deg, #00fff0 0, #00fff0 1.5%, #00e59c 26%, #5dca50 51%, #b9ae00 77.4%, #ff9a00 96%, #ff9500 100%);
}
.hero h1 {
  width: 800px; margin: 0; font-size: 56px; line-height: 65px; font-weight: 700;
  color: transparent; -webkit-background-clip: text; background-clip: text;
  background-image: linear-gradient(90deg, #00f6ff 6%, #00a8ff 26%, #3764ff 41%, #5b40ff 54%, #9d08ff 68%, #b400ff 74%, #ff00ff 90%);
}
.hero p { margin: 20px 0 15px; font-size: 19.200px; line-height: 22px; }
.cta {
  height: 51px; padding: 0 30px; border-radius: 5px; line-height: 51px;
  background: #00ffff; color: #0a061d; font-size: 19.200px;
}
.services {
  flex: 1; padding-top: 92px; text-align: center; color: #fff;
  font-family: "Liberation Sans", Arial, sans-serif; background: #0a061d;
}
.services h2 { margin: 0; font-size: 40px; line-height: 46px; font-weight: 700; }

/* Dock */
.dock {
  width: 1358px; height: 61px; margin: 3px 0 0 41px; padding-left: 2px; flex: none;
  display: flex; align-items: stretch; border: 1px solid #35414b; border-radius: 17px;
  background: linear-gradient(90deg, #121c25, #131d2a 50%, #101a23);
}
.defs { position: absolute; }
.cell { width: 50.240px; flex: none; position: relative; padding: 8px 0 0 6px; }
.cell svg { width: 38px; height: 38px; overflow: visible; display: block; }
.running::after { content: ""; position: absolute; left: 23px; bottom: 1px; width: 4px; height: 4px; border-radius: 50%; background: #9299a2; }
.sep { width: 1px; height: 45px; margin: 7px 10.500px 0 11.500px; background: #46515b; flex: none; }
.badge {
  position: absolute; left: 32px; top: 4px; width: 17px; height: 17px; border-radius: 50%;
  background: #ee1010; color: #fff; font-size: 9.500px; line-height: 17px; text-align: center;
}
.cal-month { font: 700 7px Inter, sans-serif; fill: #fff; text-anchor: middle; }
.cal-day { font: 300 23px Inter, sans-serif; fill: #2a2a2a; stroke: #2a2a2a; stroke-width: .2; text-anchor: middle; letter-spacing: -0.8px; }
.zoom-word { font: 500 10.500px Inter, sans-serif; fill: #fff; text-anchor: middle; letter-spacing: -0.3px; }
.tv-word { font: 500 15px Inter, sans-serif; fill: #fff; letter-spacing: -0.5px; }
```
